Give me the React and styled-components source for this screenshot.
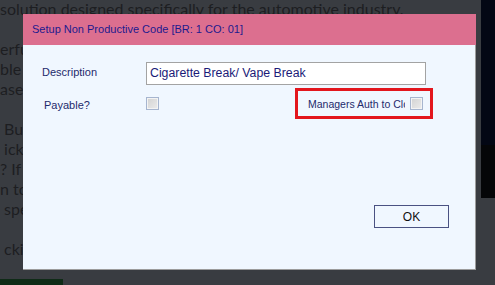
import React from 'react';
import styled, { createGlobalStyle } from 'styled-components';

const GlobalStyle = createGlobalStyle`
    html, body {
        margin: 0;
        padding: 0;
        background: #393c41;
    }
`;

const Page = styled.div`
    position: relative;
    width: 495px;
    height: 285px;
    overflow: hidden;
    display: grid;
    grid-template-columns: minmax(0, 1fr) 14px;
    background: #393c41;
    font-family: Lato, "Open Sans", sans-serif;
`;

const Article = styled.div`
    margin-top: -1px;
    color: #1d1e21;
    font-size: 16px;
    line-height: 20px;
`;

const Para = styled.div`
    margin-bottom: 20px;
`;

const Line = styled.div`
    white-space: pre;
    overflow: hidden;
`;

const GreenButton = styled.div`
    width: 63px;
    height: 15px;
    overflow: hidden;
    background: #0f2b17;
    color: #e8ece8;
    font-size: 12px;
    font-weight: 700;
    line-height: 26px;
    padding-left: 12px;
    box-sizing: border-box;
`;

const Side = styled.div`
    display: flex;
    flex-direction: column;
    height: 198px;
`;

const SideTop = styled.div`
    height: 145px;
    background: #030714;
`;

const SideBottom = styled.div`
    flex: 1;
    background: #050608;
`;

const Dialog = styled.div`
    position: absolute;
    z-index: 10;
    left: 23px;
    top: 14px;
    width: 453px;
    height: 256px;
    display: flex;
    flex-direction: column;
    font-family: "Liberation Sans", Arial, sans-serif;
`;

const TitleBar = styled.div`
    height: 31px;
    flex-shrink: 0;
    background: #dc6f8f;
    color: #1d1a8e;
    font-size: 11px;
    line-height: 31px;
    padding-left: 9px;
`;

const Body = styled.div`
    flex: 1;
    display: flex;
    flex-direction: column;
    background: #f0f7ff;
    border-right: 1px solid #9c9c9c;
    border-bottom: 1px solid #9c9c9c;
    padding: 17px 49px 41px 19px;
`;

const Row = styled.div`
    display: flex;
    align-items: center;
    margin-top: ${p => p.$top || 0}px;
`;

const Label = styled.div`
    width: ${p => p.$width}px;
    padding-left: ${p => p.$indent || 0}px;
    box-sizing: border-box;
    flex-shrink: 0;
    color: #1e2a6c;
    font-size: 11px;
    margin-top: ${p => p.$shift || 0}px;
`;

const TextInput = styled.div`
    flex: 1;
    height: 23px;
    box-sizing: border-box;
    border: 1px solid #a3a3a3;
    background: #fff;
    color: #1a1a78;
    font-size: 12.3px;
    line-height: 21px;
    padding-left: 3px;
`;

const Check = styled.div`
    width: 13px;
    height: 13px;
    box-sizing: border-box;
    flex-shrink: 0;
    border: 1px solid #a6b5cf;
    background: linear-gradient(135deg, #d2d2d2, #ececec);
    box-shadow: inset 0 0 0 1px #f3f3f3;
`;

const Spacer = styled.div`
    flex: 1;
`;

const Highlight = styled.div`
    display: flex;
    align-items: center;
    height: 31px;
    box-sizing: border-box;
    border: 3px solid #e3161d;
    padding: 0 7px 0 10px;
    margin-right: -7px;
    gap: 5px;
`;

const Clipped = styled.div`
    width: 97px;
    overflow: hidden;
    white-space: nowrap;
    color: #1e2a6c;
    font-size: 10.5px;
`;

const Footer = styled.div`
    margin-top: auto;
    display: flex;
    justify-content: flex-end;
    margin-right: -23px;
`;

const Button = styled.div`
    width: 75px;
    height: 23px;
    box-sizing: border-box;
    border: 1.5px solid #4a5282;
    display: flex;
    align-items: center;
    justify-content: center;
    color: #111;
    font-size: 12px;
`;

export default function App() {
    return (
        <Page>
            <GlobalStyle />
            <div>
                <Article>
                    <Para>
                        <Line>solution designed specifically for the automotive industry.</Line>
                    </Para>
                    <Para>
                        <Line>erful dealership software that brings every department</Line>
                        <Line>ble and connected in one place for your whole team</Line>
                        <Line>ase of use and reliable support every single day</Line>
                    </Para>
                    <Para>
                        <Line> Built for dealers who want to work smarter</Line>
                        <Line> icker processes and fewer mistakes across sites</Line>
                        <Line>? If you are looking for a better way to manage</Line>
                        <Line>n to speak with our team about your needs today</Line>
                        <Line> specialists are ready to help you get started</Line>
                    </Para>
                    <Para>
                        <Line> cking your free demo is quick and easy</Line>
                    </Para>
                </Article>
                <GreenButton>Make</GreenButton>
            </div>
            <Side>
                <SideTop />
                <SideBottom />
            </Side>

            <Dialog>
                <TitleBar>Setup Non Productive Code [BR: 1 CO: 01]</TitleBar>
                <Body>
                    <Row>
                        <Label $width={104} $shift={-3}>Description</Label>
                        <TextInput>Cigarette Break/ Vape Break</TextInput>
                    </Row>
                    <Row $top={3}>
                        <Label $width={104} $indent={2} $shift={2}>Payable?</Label>
                        <Check />
                        <Spacer />
                        <Highlight>
                            <Clipped>Managers Auth to Clock Off</Clipped>
                            <Check />
                        </Highlight>
                    </Row>
                    <Footer>
                        <Button>OK</Button>
                    </Footer>
                </Body>
            </Dialog>
        </Page>
    );
}
